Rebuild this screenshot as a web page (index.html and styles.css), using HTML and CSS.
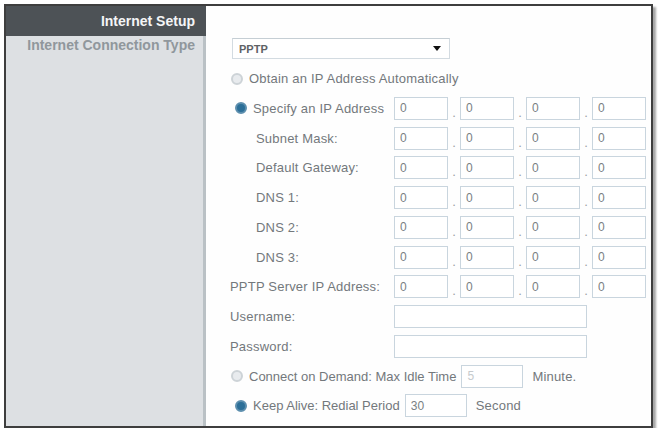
FILE: index.html
```html
<!DOCTYPE html>
<html lang="en">
<head>
    <meta charset="UTF-8">
    <title>Internet Setup</title>
    <link rel="stylesheet" href="styles.css">
</head>
<body>

    <div class="frame">
        <div class="sidebar">
            <div class="sidebar-head">Internet Setup</div>
            <div class="sidebar-item">Internet Connection Type</div>
        </div>

        <form class="content">
            <!-- connection type -->
            <div class="row">
                <div class="select-box">
                    <span>PPTP</span>
                    <span class="arrow"></span>
                </div>
            </div>

            <div class="row">
                <label class="radio-label"><input type="radio" name="ip" class="radio"> Obtain an IP Address Automatically</label>
            </div>

            <div class="row">
                <label class="radio-label shift"><input type="radio" name="ip" class="radio" checked> Specify an IP Address</label>
                <div class="ip-group">
                    <input class="ip-field" value="0"><span class="dot">.</span><input class="ip-field" value="0"><span class="dot">.</span><input class="ip-field" value="0"><span class="dot">.</span><input class="ip-field" value="0">
                </div>
            </div>

            <div class="row">
                <span class="label sub">Subnet Mask:</span>
                <div class="ip-group">
                    <input class="ip-field" value="0"><span class="dot">.</span><input class="ip-field" value="0"><span class="dot">.</span><input class="ip-field" value="0"><span class="dot">.</span><input class="ip-field" value="0">
                </div>
            </div>

            <div class="row">
                <span class="label sub">Default Gateway:</span>
                <div class="ip-group">
                    <input class="ip-field" value="0"><span class="dot">.</span><input class="ip-field" value="0"><span class="dot">.</span><input class="ip-field" value="0"><span class="dot">.</span><input class="ip-field" value="0">
                </div>
            </div>

            <div class="row">
                <span class="label sub">DNS 1:</span>
                <div class="ip-group">
                    <input class="ip-field" value="0"><span class="dot">.</span><input class="ip-field" value="0"><span class="dot">.</span><input class="ip-field" value="0"><span class="dot">.</span><input class="ip-field" value="0">
                </div>
            </div>

            <div class="row">
                <span class="label sub">DNS 2:</span>
                <div class="ip-group">
                    <input class="ip-field" value="0"><span class="dot">.</span><input class="ip-field" value="0"><span class="dot">.</span><input class="ip-field" value="0"><span class="dot">.</span><input class="ip-field" value="0">
                </div>
            </div>

            <div class="row">
                <span class="label sub">DNS 3:</span>
                <div class="ip-group">
                    <input class="ip-field" value="0"><span class="dot">.</span><input class="ip-field" value="0"><span class="dot">.</span><input class="ip-field" value="0"><span class="dot">.</span><input class="ip-field" value="0">
                </div>
            </div>

            <div class="row">
                <span class="label">PPTP Server IP Address:</span>
                <div class="ip-group">
                    <input class="ip-field" value="0"><span class="dot">.</span><input class="ip-field" value="0"><span class="dot">.</span><input class="ip-field" value="0"><span class="dot">.</span><input class="ip-field" value="0">
                </div>
            </div>

            <div class="row">
                <span class="label">Username:</span>
                <input type="text" class="text-field">
            </div>

            <div class="row">
                <span class="label">Password:</span>
                <input type="password" class="text-field">
            </div>

            <!-- connection mode -->
            <div class="row">
                <div class="inline-row">
                    <label class="radio-label tight"><input type="radio" name="mode" class="radio"> Connect on Demand: Max Idle Time</label>
                    <input class="small-field idle" value="5" disabled>
                    <span class="unit">Minute.</span>
                </div>
            </div>

            <div class="row">
                <div class="inline-row">
                    <label class="radio-label shift tight"><input type="radio" name="mode" class="radio" checked> Keep Alive: Redial Period</label>
                    <input class="small-field" value="30">
                    <span class="unit">Second</span>
                </div>
            </div>
        </form>
    </div>

</body>
</html>
```

FILE: styles.css
```css
* {
    margin: 0;
    padding: 0;
    box-sizing: border-box;
}

body {
    font-family: 'Liberation Sans', Arial, sans-serif;
    background-color: #ffffff;
    color: #73787c;
    font-size: 13px;
}

.frame {
    display: flex;
    width: 649px;
    height: 424px;
    margin: 4px 0 0 4px;
    border: 2px solid #3e3e3e;
    box-shadow: 3px 3px 2px rgba(0, 0, 0, 0.35);
    background-color: #fefefe;
}

.sidebar {
    width: 200px;
    background-color: #dde0e3;
    border-right: 3px solid #bac1c5;
}

.sidebar-head {
    height: 30px;
    margin-right: -3px;
    padding: 7px 11px 0 0;
    background-color: #4d5256;
    color: #f4f5f6;
    font-size: 14px;
    font-weight: bold;
    text-align: right;
}

.sidebar-item {
    padding: 1px 8px 0 0;
    color: #90979c;
    font-size: 14px;
    font-weight: bold;
    text-align: right;
}

.content {
    flex: 1;
    padding: 28px 0 0 24px;
}

.row {
    display: grid;
    grid-template-columns: 164px auto;
    align-items: center;
    height: 29.75px;
}

.select-box {
    grid-column: 1 / -1;
    display: flex;
    justify-content: space-between;
    align-items: center;
    width: 218px;
    height: 21px;
    margin-left: 2px;
    padding: 0 8px 0 6px;
    border: 1px solid #d3dbe1;
    border-top-color: #c5ced4;
    background-color: #ffffff;
    color: #5e6266;
    font-size: 11px;
    font-weight: bold;
}

.arrow {
    width: 0;
    height: 0;
    border-left: 4px solid transparent;
    border-right: 4px solid transparent;
    border-top: 5px solid #111111;
}

.radio-label {
    display: flex;
    align-items: center;
    gap: 6px;
    white-space: nowrap;
    letter-spacing: 0.2px;
}

.radio-label.shift {
    padding-left: 4px;
}

.radio-label.tight {
    letter-spacing: 0;
}

.row > .radio-label:only-child {
    grid-column: 1 / -1;
}

.radio {
    appearance: none;
    width: 12px;
    height: 12px;
    margin-left: 1px;
    border-radius: 50%;
    border: 2px solid #cdd3d7;
    background-color: #e8ebee;
}

.radio:checked {
    border-color: #5d8fae;
    background-color: #2c6f98;
}

.label {
    white-space: nowrap;
    letter-spacing: 0.2px;
}

.label.sub {
    padding-left: 26px;
}

.ip-group {
    display: flex;
    align-items: flex-end;
}

.ip-field,
.text-field,
.small-field {
    height: 23px;
    padding: 0 5px;
    border: 1px solid #c9d5de;
    background-color: #ffffff;
    font-family: 'Liberation Sans', Arial, sans-serif;
    font-size: 12px;
    color: #7a7f83;
    outline: none;
}

.ip-field {
    width: 54px;
}

.dot {
    width: 12px;
    text-align: center;
    line-height: 14px;
    color: #9a9fa3;
}

.text-field {
    width: 193px;
}

.inline-row {
    grid-column: 1 / -1;
    display: flex;
    align-items: center;
    gap: 5px;
}

.small-field {
    width: 62px;
}

.small-field.idle {
    color: #c6cacd;
}

.unit {
    margin-left: 4px;
    letter-spacing: 0.2px;
}
```
